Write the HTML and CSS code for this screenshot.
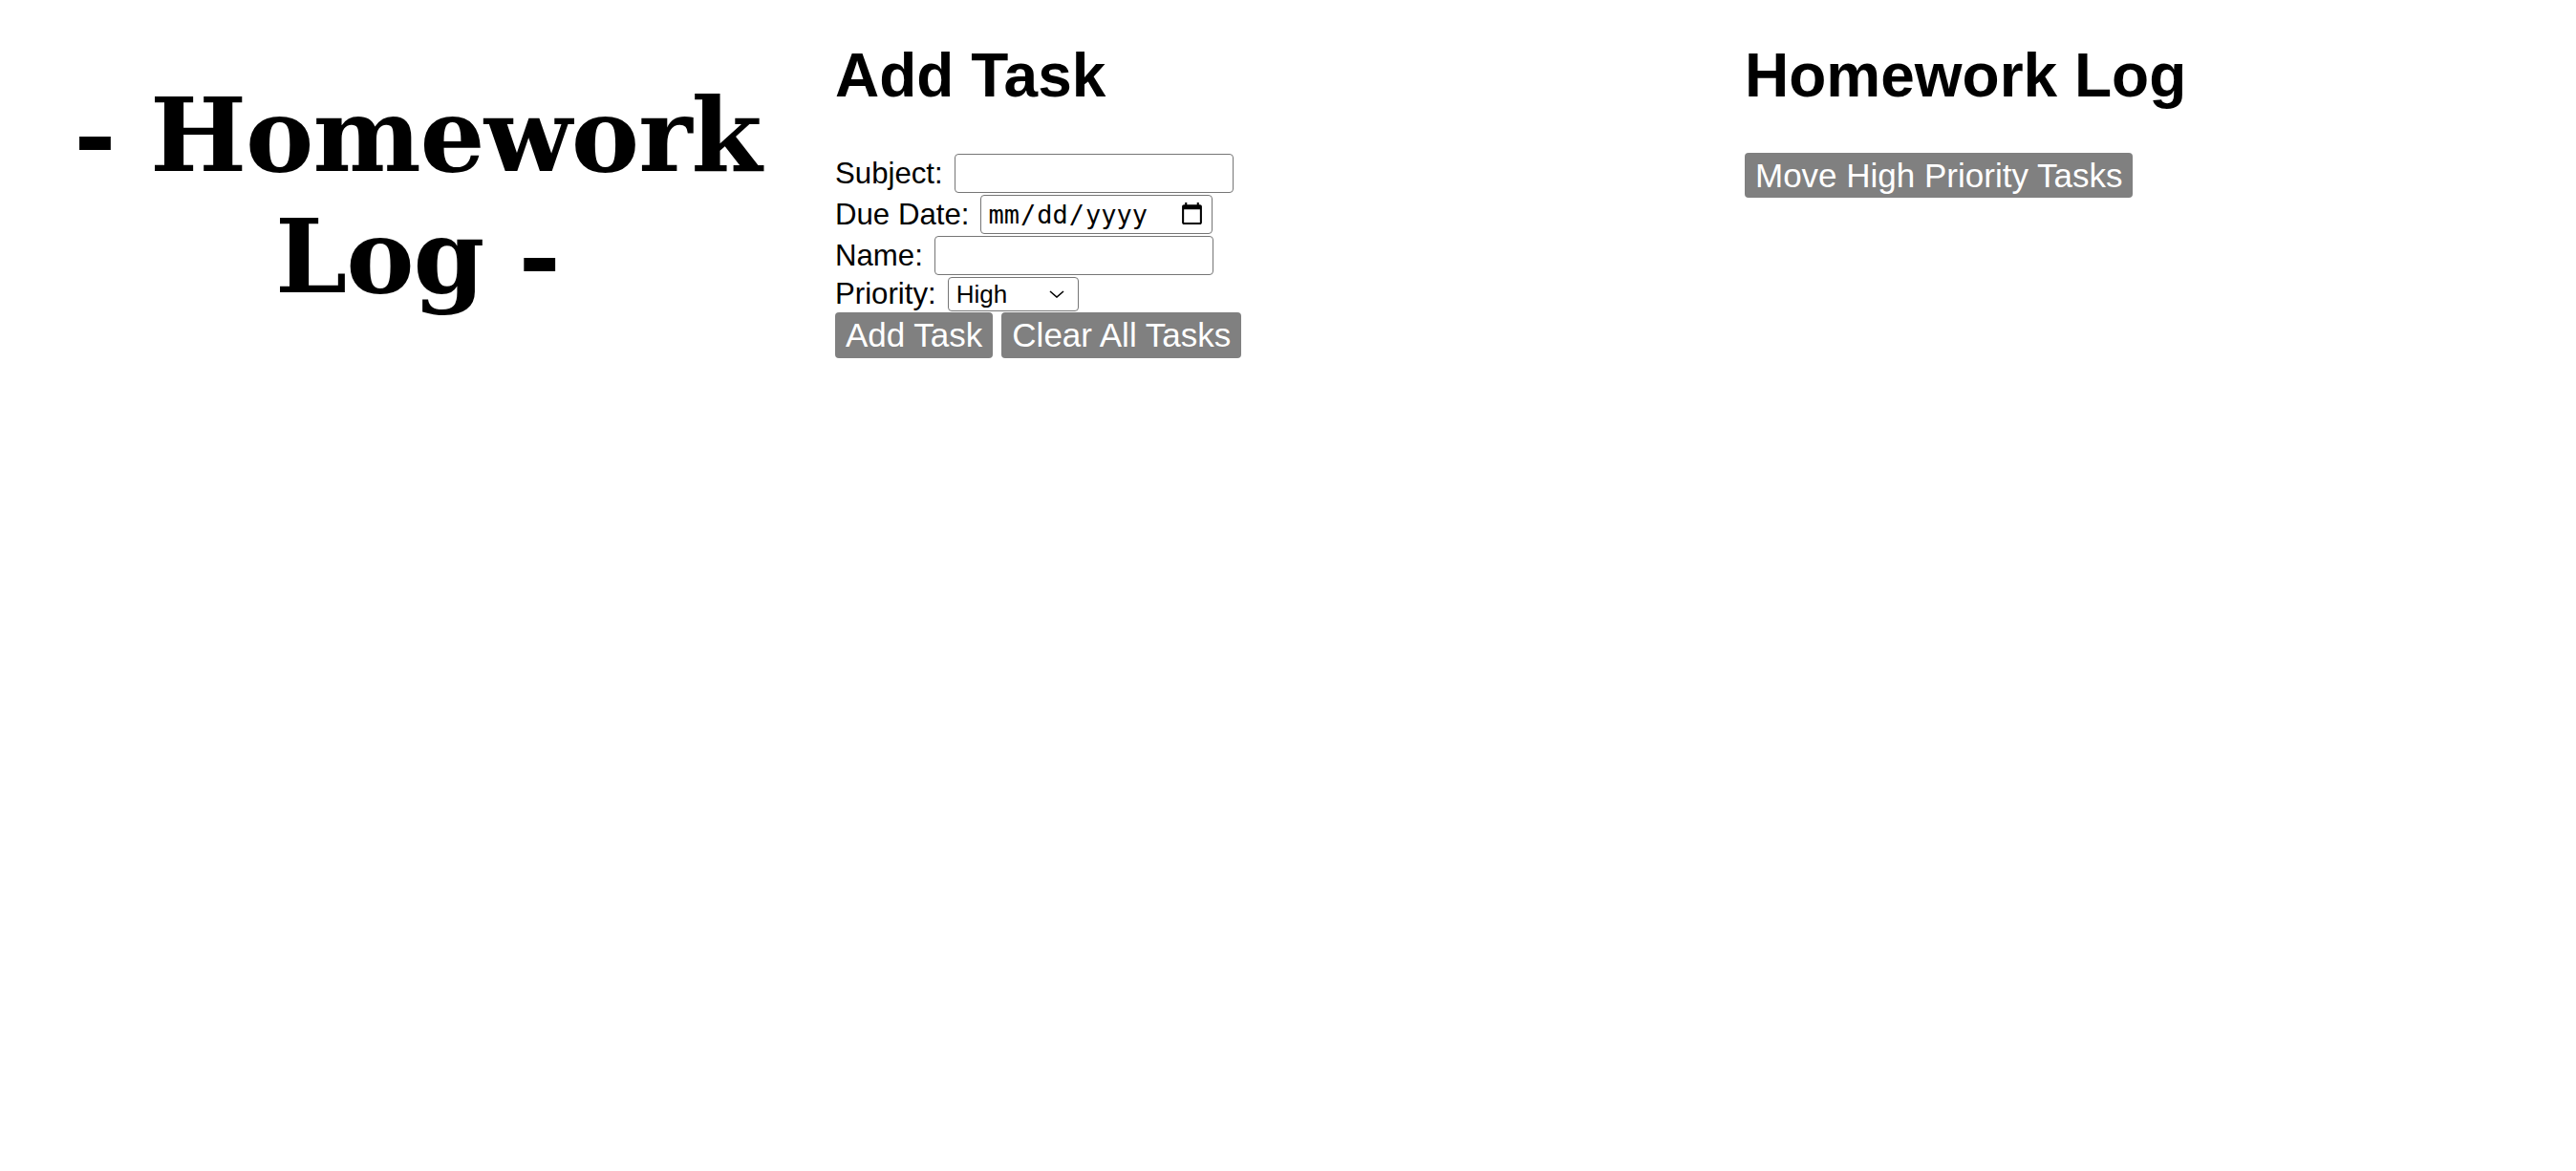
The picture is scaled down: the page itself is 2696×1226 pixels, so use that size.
FILE: index.html
```html
<!DOCTYPE html>
<html lang="en">
<head>
<meta charset="utf-8">
<title>Homework Log</title>
<link rel="stylesheet" href="styles.css">
</head>
<body>
<div class="page">
  <div class="col-title">
    <h1 class="title">- Homework Log -</h1>
  </div>
  <div class="col-form">
    <h2 class="heading">Add Task</h2>
    <form class="task-form">
      <div class="row"><label class="label">Subject:</label><input type="text" class="field"></div>
      <div class="row"><label class="label">Due Date:</label><input type="date" class="field date"></div>
      <div class="row"><label class="label">Name:</label><input type="text" class="field"></div>
      <div class="row"><label class="label">Priority:</label><span class="select-wrap"><select class="select"><option>High</option><option>Medium</option><option>Low</option></select><svg class="chevron" width="16" height="8" viewBox="0 0 16 8"><path d="M1 1 L8 7 L15 1" fill="none" stroke="#000" stroke-width="1.6"/></svg></span></div>
      <div class="row buttons"><button type="button" class="btn">Add Task</button><button type="button" class="btn">Clear All Tasks</button></div>
    </form>
  </div>
  <div class="col-log">
    <h2 class="heading">Homework Log</h2>
    <button type="button" class="btn btn-move">Move High Priority Tasks</button>
  </div>
</div>
</body>
</html>
```
FILE: styles.css
```css
html, body {
  margin: 0;
  padding: 0;
  background: #ffffff;
  color: #000000;
}
body {
  padding: 0 8px;
  font-family: "Liberation Sans", Arial, sans-serif;
}
.page {
  display: grid;
  grid-template-columns: 866px 952px 1fr;
  align-items: start;
}
.col-title {
  padding-top: 78px;
}
.title {
  margin: 0 8px 0 0;
  text-align: center;
  font-family: "DejaVu Serif", serif;
  font-weight: bold;
  font-size: 107px;
  letter-spacing: -1px;
  line-height: 127px;
}
.col-form, .col-log {
  padding-top: 43px;
}
.heading {
  margin: 0 0 46px;
  font-size: 64px;
  line-height: 72px;
  font-weight: bold;
}
.task-form {
  margin: 0;
  font-size: 31.2px;
}
.row {
  display: flex;
  align-items: center;
  gap: 12px;
  margin-bottom: 2px;
}
.label {
  line-height: 36px;
}
.field {
  box-sizing: border-box;
  width: 292px;
  height: 41px;
  margin: 0;
  border: 1px solid #767676;
  border-radius: 4px;
  padding: 1px 4px;
  font-family: "Liberation Sans", Arial, sans-serif;
  font-size: 26px;
  background: #fff;
}
.date {
  width: 243px;
  font-family: "DejaVu Sans Mono", monospace;
  font-size: 27px;
  padding: 1px 5px 1px 6px;
}
.select-wrap {
  position: relative;
  display: inline-flex;
}
.select {
  box-sizing: border-box;
  width: 137px;
  height: 36px;
  margin: 0;
  border: 1px solid #767676;
  border-radius: 4px;
  padding: 0 0 0 8px;
  font-family: "Liberation Sans", Arial, sans-serif;
  font-size: 26px;
  background: #fff;
  color: #000;
  appearance: none;
  -webkit-appearance: none;
}
.chevron {
  position: absolute;
  right: 15px;
  top: 14px;
  pointer-events: none;
}
.buttons {
  gap: 9px;
  margin-top: -1px;
}
.btn {
  box-sizing: border-box;
  height: 48px;
  margin: 0;
  border: none;
  border-radius: 4px;
  padding: 0 11px;
  background: #808080;
  color: #ffffff;
  font-family: "Liberation Sans", Arial, sans-serif;
  font-size: 35px;
  line-height: 48px;
}
.btn-move {
  height: 47px;
  line-height: 47px;
}
.col-log .heading {
  margin-bottom: 45px;
}
```
